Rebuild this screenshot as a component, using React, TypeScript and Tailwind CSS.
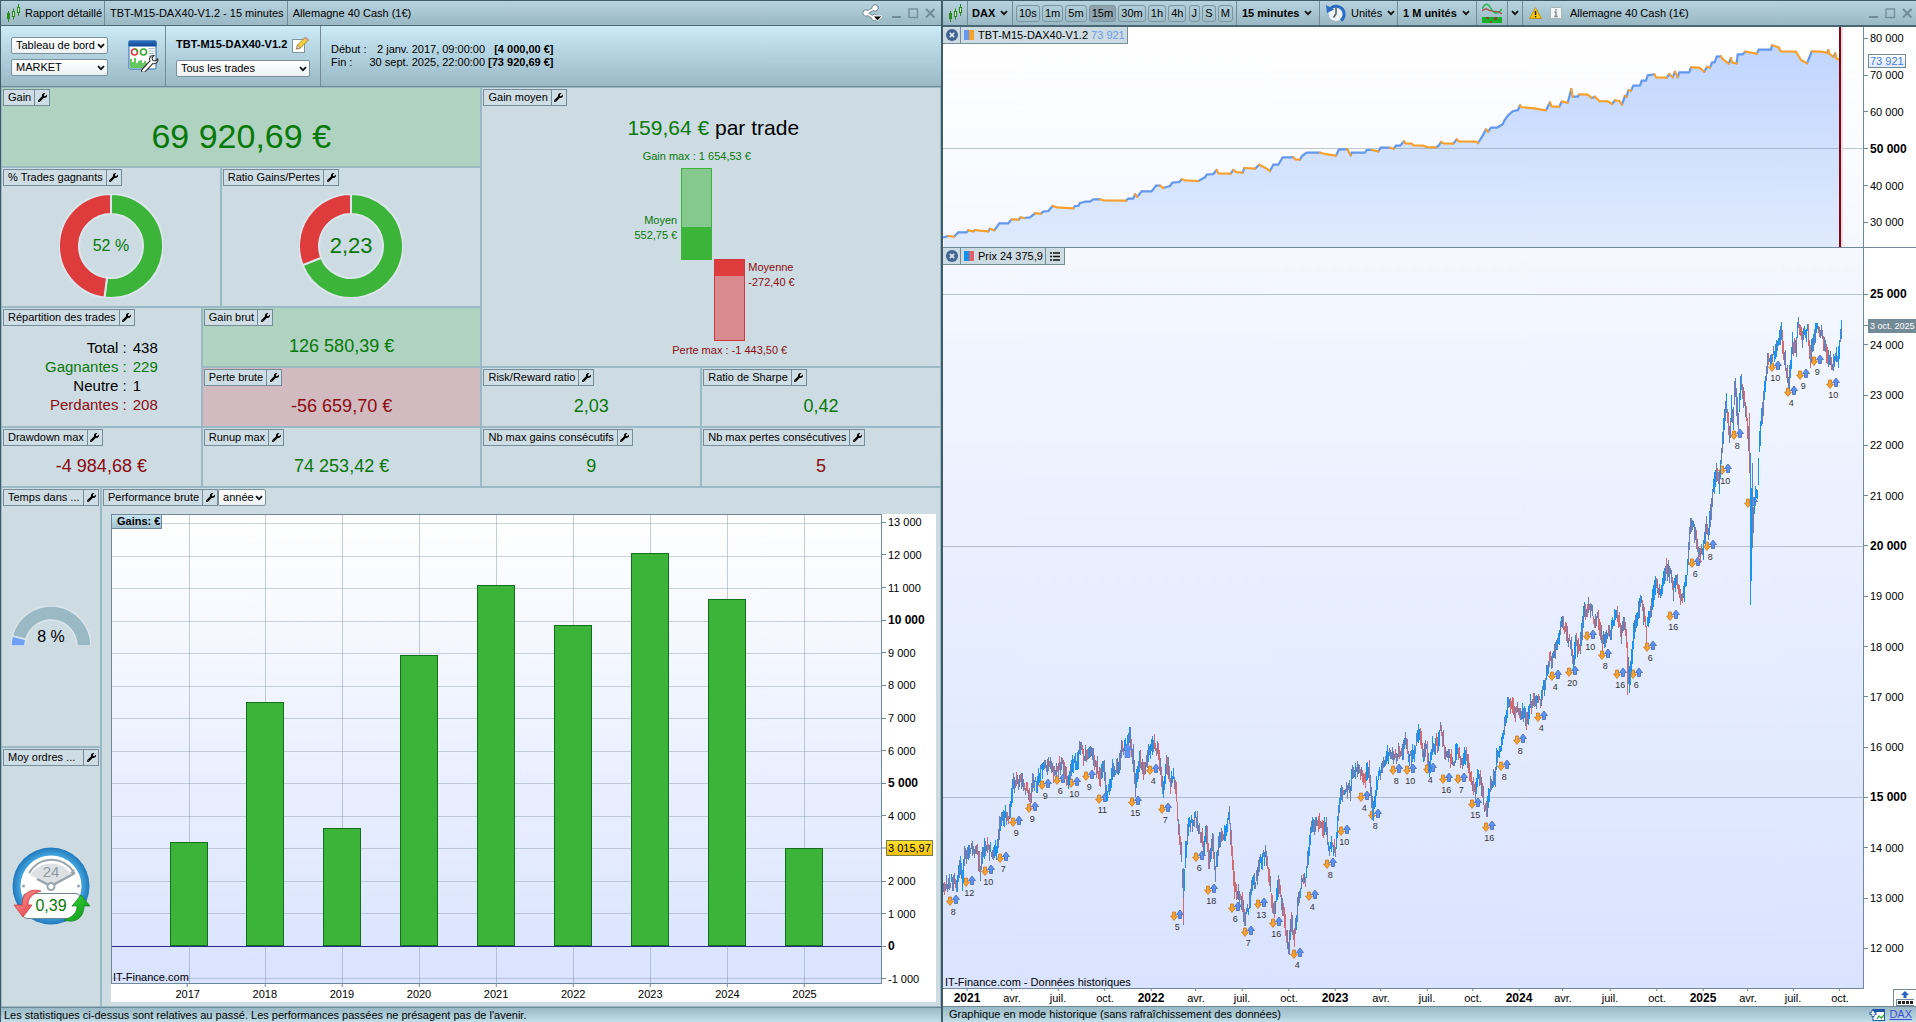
import React from "react";
import { FaWrench } from "react-icons/fa";

const FONT = "font-['Liberation_Sans',Arial,sans-serif]";

/* ---------- small icons ---------- */

function Candles() {
  return (
    <svg width="16" height="18" viewBox="0 0 16 18" className="shrink-0" aria-hidden="true">
      <path d="M2.500 7v11M7.500 4.500v11M12.500 0v12" stroke="#2c8a1c" fill="none" />
      <rect x="1" y="9" width="3" height="6" fill="#2c8a1c" />
      <rect x="6.500" y="7.500" width="2" height="5" fill="#dff2d8" stroke="#2c8a1c" />
      <rect x="11.500" y="3.500" width="2" height="5" fill="#dff2d8" stroke="#2c8a1c" />
    </svg>
  );
}

function Chevron({ className = "" }: { className?: string }) {
  return (
    <svg width="8" height="6" viewBox="0 0 8 6" className={`shrink-0 ${className}`} aria-hidden="true">
      <path d="M1 1.200l3 3 3-3" stroke="#111" strokeWidth="1.800" fill="none" />
    </svg>
  );
}

function WindowControls() {
  return (
    <div className="flex items-center gap-1.5">
      <button aria-label="Réduire" className="flex">
        <svg width="11" height="12"><path d="M1 10h9" stroke="#728b97" strokeWidth="2" /></svg>
      </button>
      <button aria-label="Agrandir" className="flex">
        <svg width="11" height="12"><rect x="1" y="2" width="8.500" height="8.500" stroke="#728b97" strokeWidth="1.300" fill="none" /></svg>
      </button>
      <button aria-label="Fermer" className="flex">
        <svg width="10" height="12"><path d="M1 2l8.500 8.500M9.500 2L1 10.500" stroke="#728b97" strokeWidth="2" /></svg>
      </button>
    </div>
  );
}

function ShareIcon() {
  return (
    <svg width="21" height="18" viewBox="0 0 21 18" aria-hidden="true">
      <g stroke="#6f8793" strokeWidth="3.600"><path d="M4 9l9-5M4 9l8 5" /></g>
      <g fill="#fff" stroke="#6f8793"><circle cx="4" cy="9" r="3.200" /><circle cx="13" cy="4" r="3.200" /><circle cx="12.500" cy="13.500" r="3.200" /></g>
      <g stroke="#fff" strokeWidth="2"><path d="M4 9l9-5M4 9l8 5" /></g>
      <path d="M11 12h9l-4.500 5z" fill="#000" stroke="#fff" />
    </svg>
  );
}

function ReportIcon() {
  return (
    <svg width="32" height="32" viewBox="0 0 32 32" aria-hidden="true">
      <defs>
        <linearGradient id="repBar" x1="0" y1="0" x2="0" y2="1">
          <stop offset="0" stopColor="#2f6fbd" /><stop offset="1" stopColor="#0d4795" />
        </linearGradient>
      </defs>
      <rect x="1" y="1" width="27" height="28" rx="1.500" fill="#fff" stroke="#2a66ae" />
      <rect x="0.500" y="0.500" width="28" height="6" rx="1" fill="url(#repBar)" />
      <circle cx="6.500" cy="12" r="3" fill="none" stroke="#d8383c" strokeWidth="1.600" />
      <path d="M6.500 9a3 3 0 0 1 3 3" fill="none" stroke="#35a834" strokeWidth="1.600" />
      <circle cx="15.500" cy="12" r="3" fill="none" stroke="#35a834" strokeWidth="1.600" />
      <path d="M20.500 8.500h6M20.500 11h6M20.500 13.500h6M20.500 16h6" stroke="#a9bcc6" />
      <path d="M3 28v-9M5 28v-6M7 28V18M9 28v-5M11 28v-7M13 28V20M15 28v-5M17 28v-7M19 28v-5" stroke="#35b52b" strokeWidth="1.500" />
      <path d="M14 29.500l8-8.500c-1.400-3 .8-6 4-5.500l-2 2.400 1 2.600 2.800.4 1.800-2c1 3-1.700 5.600-4.800 4.700l-7.600 8c-2 1.800-4.800-.3-3.200-2.100z" fill="#fff" stroke="#333" strokeWidth="1.100" />
    </svg>
  );
}

function PencilIcon() {
  return (
    <svg width="18" height="18" viewBox="0 0 18 18" aria-hidden="true">
      <rect x="0.500" y="3.500" width="12" height="13" fill="#fff" stroke="#7e949e" />
      <path d="M4.500 13l1-4 8-8 3 3-8 8z" fill="#f6cf3c" stroke="#8f7a31" strokeWidth=".8" />
      <path d="M4.500 13l1-4 3 3z" fill="#f3e3c0" stroke="#7a6a3a" strokeWidth=".6" />
      <path d="M12.200 2.300l1.300-1.300 3 3-1.300 1.300z" fill="#d89aa0" />
    </svg>
  );
}

function HistoryClock() {
  return (
    <svg width="20" height="20" viewBox="0 0 20 20" aria-hidden="true">
      <circle cx="10" cy="10.500" r="8" fill="#eef4fb" stroke="#9fb1bf" />
      <path d="M4 6a8 8 0 1 1 11 11.500" fill="none" stroke="#2c6cc4" strokeWidth="3" />
      <path d="M0 2l1 8 7-3.500z" fill="#2c6cc4" />
      <path d="M10 5v6l-2.500 3.500" stroke="#555" strokeWidth="1.500" fill="none" />
    </svg>
  );
}

function IndicatorIcon() {
  return (
    <svg width="20" height="20" viewBox="0 0 20 20" aria-hidden="true">
      <path d="M0 6C3 0 6 0 8 4s6 10 12 2" stroke="#27b54a" strokeWidth="1.500" fill="none" />
      <path d="M0 8c4-4 6-1 9 0s7-1 11 3" stroke="#a8554e" strokeWidth="1.300" fill="none" />
      <rect y="14" width="20" height="6" fill="#17b02b" />
      <path d="M4 14h3v2H4zM12 14h3v3h-3zM8 18h2v2H8z" fill="#8a4a28" />
    </svg>
  );
}

function WarningIcon() {
  return (
    <svg width="13" height="12" viewBox="0 0 13 12" aria-hidden="true">
      <path d="M6.500.7L12.500 11.500H.5z" fill="#fbc816" stroke="#b98f12" strokeWidth=".9" strokeLinejoin="round" />
      <path d="M6.500 4v4" stroke="#222" strokeWidth="1.500" /><path d="M6.500 9v1.400" stroke="#222" strokeWidth="1.500" />
    </svg>
  );
}

function InfoIcon() {
  return (
    <svg width="12" height="12" viewBox="0 0 12 12" aria-hidden="true">
      <rect x=".5" y=".5" width="11" height="11" rx="1" fill="#f4f6f7" stroke="#a3b3ba" />
      <path d="M6 2v1.600M4.500 5H6v4.500M4.300 9.500h3.500" stroke="#7d8a91" strokeWidth="1.400" fill="none" />
    </svg>
  );
}

function CloseBadge() {
  return (
    <svg width="12" height="12" viewBox="0 0 12 12" aria-hidden="true">
      <circle cx="6" cy="6" r="6" fill="#446391" />
      <path d="M3.800 3.800l4.400 4.400M8.200 3.800L3.800 8.200" stroke="#dce8f0" strokeWidth="1.700" />
    </svg>
  );
}

/* ---------- shared pieces ---------- */

function Choice({ label, options, className = "" }: { label: string; options: string[]; className?: string }) {
  return (
    <span className={`relative flex h-[17px] ${className}`}>
      <select aria-label={label} className="w-full appearance-none rounded-[2px] border border-[#7b929d] bg-linear-to-b from-white to-[#eef1f3] pl-1 pr-2.5 text-[11px] leading-[15px] text-black">
        {options.map((o) => (
          <option key={o}>{o}</option>
        ))}
      </select>
      <Chevron className="pointer-events-none absolute right-[3px] top-[6px]" />
    </span>
  );
}

function Chip({ title, wide = false }: { title: string; wide?: boolean }) {
  return (
    <div className={`flex h-[17px] border border-[#758d99] bg-[#cfdde4] text-[11px] leading-[15px] ${wide ? "w-full" : ""}`}>
      <h2 className={`whitespace-nowrap pl-1 pr-[3px] ${wide ? "flex-1" : ""}`}>{title}</h2>
      <button aria-label={`Réglages : ${title}`} className="flex w-[15px] items-center justify-center border-l border-[#758d99]">
        <FaWrench size={9} />
      </button>
    </div>
  );
}

function Card({ title, children, tone = "bg-[#cddce3]", className = "", wide = false }: { title: string; children?: React.ReactNode; tone?: string; className?: string; wide?: boolean }) {
  return (
    <section className={`flex min-w-0 flex-col items-start p-px ${tone} ${className}`}>
      <Chip title={title} wide={wide} />
      <div className="flex w-full flex-1 items-center justify-center">{children}</div>
    </section>
  );
}

const GREEN = "text-[#087808]";
const RED = "text-[#8c0b12]";

function Figure({ value, tone }: { value: string; tone: string }) {
  return <p className={`whitespace-nowrap text-[18px] leading-[22px] ${tone}`}>{value}</p>;
}

function polar(cx: number, cy: number, r: number, share: number) {
  const a = share * 2 * Math.PI - Math.PI / 2;
  return `${(cx + r * Math.cos(a)).toFixed(2)} ${(cy + r * Math.sin(a)).toFixed(2)}`;
}

function ring(cx: number, cy: number, R: number, r: number, from: number, to: number) {
  const big = to - from > 0.5 ? 1 : 0;
  return `M${polar(cx, cy, R, from)}A${R} ${R} 0 ${big} 1 ${polar(cx, cy, R, to)}L${polar(cx, cy, r, to)}A${r} ${r} 0 ${big} 0 ${polar(cx, cy, r, from)}Z`;
}

function Donut({ share, label, size }: { share: number; label: string; size: string }) {
  return (
    <div className="relative flex size-[104px] items-center justify-center">
      <svg viewBox="0 0 104 104" className="absolute inset-0" aria-hidden="true">
        <g stroke="#dbe6ec" strokeWidth="2">
          <path d={ring(52, 52, 52, 32, 0, share)} fill="#3cb43a" />
          <path d={ring(52, 52, 52, 32, share, 1)} fill="#dd3b3c" />
        </g>
      </svg>
      <span className={`relative ${GREEN} ${size}`}>{label}</span>
    </div>
  );
}

/* ---------- report window ---------- */

function AverageGain() {
  return (
    <Card title="Gain moyen">
      <div className="flex flex-col items-center self-start pl-1 pt-2 text-[11px] leading-[15px]">
        <p className="mb-[7px] text-[21px] leading-7">
          <span className={GREEN}>159,64 €</span> par trade
        </p>
        <div className="flex gap-[2px]">
          <div className="flex w-[31px] flex-col items-center">
            <p className={`whitespace-nowrap ${GREEN}`}>Gain max : 1 654,53 €</p>
            <div className="relative mt-1 flex h-[92px] w-full flex-col justify-end border border-[#3cb43a] bg-[#86c98e]">
              <div className="h-8 bg-[#3cb43a]" />
              <p className={`absolute right-full bottom-[46px] mr-[5px] translate-y-full whitespace-nowrap text-right ${GREEN}`}>
                Moyen<br />552,75 €
              </p>
            </div>
          </div>
          <div className="flex w-[31px] flex-col items-center pt-[110px]">
            <div className="relative h-[82px] w-full border border-[#cf3a40] bg-[#d88a8e]">
              <div className="h-4 bg-[#dd3b3c]" />
              <p className={`absolute left-full top-0 ml-[4px] whitespace-nowrap ${RED}`}>
                Moyenne<br />-272,40 €
              </p>
            </div>
            <p className={`mt-0.5 whitespace-nowrap ${RED}`}>Perte max : -1 443,50 €</p>
          </div>
        </div>
      </div>
    </Card>
  );
}

const BREAKDOWN = [
  { name: "Total", value: "438", tone: "text-black" },
  { name: "Gagnantes", value: "229", tone: GREEN },
  { name: "Neutre", value: "1", tone: "text-black" },
  { name: "Perdantes", value: "208", tone: RED },
];

function Breakdown() {
  return (
    <table className="text-[15px] leading-[19px]">
      <tbody>
        {BREAKDOWN.map((r) => (
          <tr key={r.name} className={r.tone}>
            <th scope="row" className="p-0 text-right font-normal">{r.name}&nbsp;:</th>
            <td className="pl-1.5">{r.value}</td>
          </tr>
        ))}
      </tbody>
    </table>
  );
}

function Gauge() {
  return (
    <div className="relative flex h-10 w-20 items-end justify-center">
      <svg viewBox="0 0 80 40" className="absolute inset-0" aria-hidden="true">
        <g stroke="#dbe6ec" strokeWidth="1.500">
          <path d={ring(40, 40, 40, 26, 0.79, 1.25)} fill="#9bb9c5" />
          <path d={ring(40, 40, 40, 26, 0.75, 0.79)} fill="#6f9ff8" />
        </g>
      </svg>
      <span className="relative text-[16px] leading-[18px]">8 %</span>
    </div>
  );
}

function OrdersClock() {
  return (
    <div className="relative h-20 w-20">
      <svg viewBox="0 0 80 80" className="absolute inset-0" aria-hidden="true">
        <defs>
          <radialGradient id="rim"><stop offset=".8" stopColor="#43a5dd" /><stop offset="1" stopColor="#2178bd" /></radialGradient>
          <linearGradient id="dn" x1="0" y1="0" x2="1" y2="1"><stop offset="0" stopColor="#ff9a9a" /><stop offset="1" stopColor="#e0353a" /></linearGradient>
          <linearGradient id="up" x1="0" y1="0" x2="1" y2="1"><stop offset="0" stopColor="#3fdc3a" /><stop offset="1" stopColor="#0a8f17" /></linearGradient>
        </defs>
        <circle cx="40" cy="40" r="38.500" fill="url(#rim)" />
        <circle cx="40" cy="40" r="30.500" fill="#fff" />
        <path d="M19 29A25 25 0 0 1 61 29L40 40z" fill="#dde1e4" />
        <path d="M18 27A26 26 0 0 1 62 25" fill="none" stroke="#9aa5ac" strokeWidth="2" />
        <path d="M64 28l-5-1 4-4z" fill="#9aa5ac" />
        <path d="M26 33l14 7 24-13" fill="none" stroke="#9aa5ac" strokeWidth="2.500" />
        <circle cx="40" cy="40.500" r="3.500" fill="#fff" stroke="#9aa5ac" strokeWidth="2" />
        <circle cx="12.500" cy="40" r="1.500" fill="#9aa5ac" /><circle cx="67.500" cy="40" r="1.500" fill="#9aa5ac" />
        <rect x="12" y="47.500" width="57" height="25" rx="4" fill="#fff" stroke="#6d8593" />
        <path d="M30 45c-11-3-19 2-19 14H3l9 12 9-12h-4c0-6 3-11 13-14z" fill="url(#dn)" stroke="#c32f35" strokeWidth=".7" />
        <path d="M53 74c12 4 20-3 20-14h6l-9-11-9 11h5c0 7-4 11-13 14z" fill="url(#up)" stroke="#08801a" strokeWidth=".7" />
      </svg>
      <span className="absolute inset-x-0 top-[17px] text-center text-[15px] leading-[18px] text-[#8f999f]">24</span>
      <span className={`absolute inset-x-0 top-[51px] text-center text-[16px] leading-[18px] ${GREEN}`}>0,39</span>
    </div>
  );
}

const YEARLY = [
  { year: 2017, gain: 3174 },
  { year: 2018, gain: 7487 },
  { year: 2019, gain: 3631 },
  { year: 2020, gain: 8934 },
  { year: 2021, gain: 11115 },
  { year: 2022, gain: 9858 },
  { year: 2023, gain: 12073 },
  { year: 2024, gain: 10656 },
  { year: 2025, gain: 3015.97 },
];
const GAIN_TICKS = [13000, 12000, 11000, 10000, 9000, 8000, 7000, 6000, 5000, 4000, 3000, 2000, 1000, 0, -1000];
const gainTop = (v: number) => 1.77 + ((13000 - v) / 1000) * 6.94;
const yearLeft = (i: number) => 9.95 + i * 10;
const spaced = (v: number) => String(v).replace(/(\d)(\d{3})$/, "$1 $2");

function PerformanceChart() {
  return (
    <div className="mb-[3px] ml-2 mr-[3px] mt-2 flex flex-1 flex-col self-stretch bg-white">
      <div className="flex flex-1">
        <div className="relative flex-1 overflow-hidden border border-[#71889a] bg-linear-to-b from-white to-[#d9e3ff]">
          {GAIN_TICKS.map((v) => (
            <div key={v} className={`absolute inset-x-0 h-px ${v === 0 ? "bg-[#2a2a8c]" : "bg-[#71889a]/35"}`} style={{ top: `${gainTop(v)}%` }} />
          ))}
          {YEARLY.map((y, i) => (
            <div key={y.year} className="absolute inset-y-0 w-px bg-[#71889a]/40" style={{ left: `${yearLeft(i)}%` }} />
          ))}
          {YEARLY.map((y, i) => (
            <div
              key={y.year}
              className="absolute w-[38px] -translate-x-1/2 border border-[#12701c] bg-[#3cb43a]"
              style={{ left: `${yearLeft(i)}%`, top: `${gainTop(y.gain)}%`, bottom: `${99.8 - gainTop(0)}%` }}
            />
          ))}
          <div className="absolute left-0 top-0 border-b border-r border-[#71889a] bg-linear-to-b from-[#c6e6f3] to-[#a3c0cc] pl-[5px] pr-px text-[11px] font-bold leading-[13px]">Gains: €</div>
          <div className="absolute bottom-0 left-px text-[11px] leading-[12px]">IT-Finance.com</div>
        </div>
        <div className="relative w-[54px] text-[11px] leading-[14px]">
          {GAIN_TICKS.map((v) => (
            <div key={v} className="absolute left-0 flex -translate-y-1/2 items-center gap-0.5 whitespace-nowrap" style={{ top: `${gainTop(v)}%` }}>
              <span className="h-px w-1 bg-[#71889a]" />
              {v !== 3000 && <span className={v % 5000 === 0 ? "text-[12px] font-bold" : ""}>{spaced(v)}</span>}
            </div>
          ))}
          <div className="absolute left-1 -translate-y-1/2 whitespace-nowrap border border-[#7d7c46] bg-linear-to-b from-[#fde12c] to-[#f0c010] px-px" style={{ top: `${gainTop(3016)}%` }}>
            3 015,97
          </div>
        </div>
      </div>
      <div className="flex h-[18px]">
        <div className="relative flex-1 text-[11px] leading-[14px]">
          {YEARLY.map((y, i) => (
            <div key={y.year} className="absolute flex -translate-x-1/2 flex-col items-center" style={{ left: `${yearLeft(i)}%` }}>
              <span className="h-[3px] w-px bg-[#71889a]" />
              <span>{y.year}</span>
            </div>
          ))}
        </div>
        <div className="w-[54px]" />
      </div>
    </div>
  );
}

function ReportWindow() {
  return (
    <section className="flex min-w-0 flex-col border-l border-r-2 border-t border-[#3f5b68] bg-[#9bb9c5]">
      <header className="flex h-[25px] items-stretch border-b border-[#4a6775] bg-linear-to-b from-[#b6d3df] to-[#9ab7c4] text-[11px]">
        <div className="flex items-center gap-[3px] px-[5px]">
          <Candles />
          <span className="w-[74px] whitespace-nowrap">Rapport détaillé</span>
        </div>
        <span className="flex items-center whitespace-nowrap border-l border-[#728b97] pl-[5px] pr-[3px]">TBT-M15-DAX40-V1.2 - 15 minutes</span>
        <span className="flex items-center whitespace-nowrap border-l border-[#728b97] px-[5px]">Allemagne 40 Cash (1€)</span>
        <div className="ml-auto flex items-center gap-2 pr-1.5">
          <button aria-label="Partager"><ShareIcon /></button>
          <WindowControls />
        </div>
      </header>

      <div className="flex h-[61px] items-stretch border-b border-[#6c8895] bg-linear-to-b from-[#cbebf9] to-[#9ab8c5] text-[11px]">
        <div className="flex items-center gap-5 pl-2.5 pr-[5px]">
          <div className="flex flex-col gap-[5px]">
            <Choice label="Vue" options={["Tableau de bord"]} className="w-[97px]" />
            <Choice label="Type d'ordre" options={["MARKET"]} className="w-[97px]" />
          </div>
          <button aria-label="Configurer le rapport"><ReportIcon /></button>
        </div>
        <div className="flex flex-col justify-center gap-1.5 border-l border-[#728b97] px-2.5">
          <div className="flex items-center justify-between">
            <h1 className="whitespace-nowrap font-bold">TBT-M15-DAX40-V1.2</h1>
            <button aria-label="Modifier"><PencilIcon /></button>
          </div>
          <Choice label="Trades" options={["Tous les trades"]} className="w-[134px]" />
        </div>
        <div className="flex items-center border-l border-[#728b97] px-2.5">
          <dl className="grid grid-cols-[auto_auto_auto] gap-x-[3px] leading-[13px]">
            <dt>Début :</dt>
            <dd className="text-right">2 janv. 2017, 09:00:00</dd>
            <dd className="text-right font-bold">[4 000,00 €]</dd>
            <dt>Fin :</dt>
            <dd className="text-right">30 sept. 2025, 22:00:00</dd>
            <dd className="text-right font-bold">[73 920,69 €]</dd>
          </dl>
        </div>
      </div>

      <main className="flex flex-1 flex-col gap-[2px] p-px">
        <div className="grid grid-cols-[479fr_458fr] gap-[2px]">
          <div className="grid grid-rows-[78px_138px_118px_58px] gap-[2px]">
            <Card title="Gain" tone="bg-[#afd3c0]">
              <p className={`text-[34px] leading-10 ${GREEN}`}>69 920,69 €</p>
            </Card>
            <div className="grid grid-cols-[218fr_259fr] gap-[2px]">
              <Card title="% Trades gagnants"><Donut share={0.52} label="52 %" size="text-[16px]" /></Card>
              <Card title="Ratio Gains/Pertes"><Donut share={0.69} label="2,23" size="text-[22px]" /></Card>
            </div>
            <div className="grid grid-cols-[199fr_278fr] gap-[2px]">
              <Card title="Répartition des trades"><Breakdown /></Card>
              <div className="grid grid-rows-2 gap-[2px]">
                <Card title="Gain brut" tone="bg-[#afd3c0]"><Figure value="126 580,39 €" tone={GREEN} /></Card>
                <Card title="Perte brute" tone="bg-[#d1bac0]"><Figure value="-56 659,70 €" tone={RED} /></Card>
              </div>
            </div>
            <div className="grid grid-cols-[199fr_278fr] gap-[2px]">
              <Card title="Drawdown max"><Figure value="-4 984,68 €" tone={RED} /></Card>
              <Card title="Runup max"><Figure value="74 253,42 €" tone={GREEN} /></Card>
            </div>
          </div>
          <div className="grid grid-rows-[278px_58px_58px] gap-[2px]">
            <div className="grid"><AverageGain /></div>
            <div className="grid grid-cols-[218fr_238fr] gap-[2px]">
              <Card title="Risk/Reward ratio"><Figure value="2,03" tone={GREEN} /></Card>
              <Card title="Ratio de Sharpe"><Figure value="0,42" tone={GREEN} /></Card>
            </div>
            <div className="grid grid-cols-[218fr_238fr] gap-[2px]">
              <Card title="Nb max gains consécutifs"><Figure value="9" tone={GREEN} /></Card>
              <Card title="Nb max pertes consécutives"><Figure value="5" tone={RED} /></Card>
            </div>
          </div>
        </div>

        <div className="flex min-h-[400px] flex-1 gap-[2px]">
          <div className="flex w-[98px] shrink-0 flex-col gap-[2px]">
            <Card title="Temps dans ..." className="flex-1" wide><Gauge /></Card>
            <Card title="Moy ordres ..." className="flex-1" wide><OrdersClock /></Card>
          </div>
          <section className="flex min-w-0 flex-1 flex-col bg-[#cddce3] p-px">
            <div className="flex">
              <Chip title="Performance brute" />
              <Choice label="Période" options={["année"]} className="w-12" />
            </div>
            <PerformanceChart />
          </section>
        </div>
      </main>

      <footer className="h-[15px] shrink-0 whitespace-nowrap border-t border-[#6c8895] bg-linear-to-b from-[#9ab8c5] to-[#c0dfea] pl-[3px] text-[11px] leading-[15px]">
        Les statistiques ci-dessus sont relatives au passé. Les performances passées ne présagent pas de l'avenir.
      </footer>
    </section>
  );
}

/* ---------- chart window ---------- */

type Pt = [number, number];
const place = (ox: number, oy: number, pts: Pt[]): Pt[] => pts.map(([x, y]) => [ox + x / 3, oy + y / 3]);

const EQUITY: Pt[] = [
  ...place(-3, -27, [
    [12, 712], [25, 708], [42, 710], [55, 697], [80, 697], [85, 691], [100, 694], [105, 690], [120, 692], [145, 694], [150, 686], [163, 691], [178, 670], [205, 670], [215, 658], [236, 659], [242, 652], [252, 654], [270, 652], [285, 640], [302, 641],
    [310, 635], [325, 633], [338, 618], [350, 622], [400, 625], [405, 618], [415, 618], [420, 609], [435, 605], [450, 605], [460, 598], [480, 598], [490, 601], [558, 602], [565, 596], [580, 596], [585, 583], [592, 590], [605, 574], [635, 574], [648, 557], [660, 557], [670, 564],
    [690, 558], [697, 548], [718, 546], [725, 538], [735, 541], [775, 543], [795, 532], [800, 524], [820, 522], [830, 510], [835, 520], [872, 521], [880, 510], [888, 516], [908, 518], [913, 504], [945, 506], [958, 494], [975, 503], [990, 513],
    [1000, 494], [1015, 494], [1028, 472], [1060, 472], [1066, 478], [1080, 479], [1086, 468], [1100, 458], [1140, 458], [1160, 463], [1188, 467], [1197, 448], [1222, 448], [1232, 466], [1235, 458], [1275, 458], [1280, 450], [1295, 450], [1315, 454], [1322, 443], [1350, 443], [1362, 446],
    [1368, 437], [1380, 437], [1392, 424], [1396, 430], [1415, 431], [1420, 436], [1450, 437], [1462, 441],
  ]),
  ...place(483, -27, [
    [0, 441], [30, 442], [38, 437], [45, 426], [52, 430], [82, 431], [92, 418], [98, 424], [150, 425], [156, 429], [170, 407], [180, 388], [186, 395], [195, 383], [213, 383], [230, 373], [235, 362], [247, 345], [260, 334], [276, 330], [282, 316], [285, 321], [325, 325], [360, 331],
    [372, 307], [376, 319], [400, 320], [407, 305], [425, 308], [436, 267], [440, 290], [455, 290], [460, 283], [485, 284], [497, 294], [507, 290], [520, 303], [545, 304], [558, 312], [567, 301], [580, 303], [588, 314], [597, 287], [602, 290], [607, 271],
    [615, 272], [622, 257], [642, 257], [647, 242], [660, 242], [665, 226], [685, 223], [690, 232], [722, 233], [730, 222], [740, 232], [747, 215], [755, 232], [760, 217], [790, 217], [795, 202], [820, 203], [835, 215], [843, 200], [852, 203],
    [858, 187], [866, 187], [872, 170], [885, 169], [890, 177], [908, 191], [915, 174], [918, 187], [932, 190], [935, 163], [950, 163], [958, 155], [992, 161], [998, 149], [1035, 149], [1038, 136], [1058, 142], [1064, 154], [1110, 155], [1125, 180], [1143, 190], [1157, 154],
    [1185, 155], [1203, 158], [1207, 150], [1210, 162], [1222, 170], [1228, 160], [1231, 175], [1245, 182],
  ]),
];

const PRICE: Pt[] = [
  ...place(-3, 432, [
    [8, 630], [30, 605], [50, 610], [60, 560], [65, 600], [72, 530], [90, 510], [110, 510], [120, 570], [133, 490], [150, 510], [165, 515], [173, 500], [178, 440], [195, 400], [205, 420], [218, 310], [240, 305], [262, 330], [270, 360], [278, 300], [290, 310], [300, 275],
    [325, 245], [340, 275], [370, 250], [380, 310], [390, 270], [410, 240], [420, 205], [430, 225], [455, 220], [465, 245], [480, 290], [490, 260], [497, 340], [505, 330], [518, 265], [530, 270], [545, 205], [555, 195], [568, 165], [578, 230], [585, 320], [597, 240],
    [613, 280], [625, 220], [637, 180], [655, 220], [668, 330], [680, 250], [690, 310], [700, 285], [708, 330], [712, 430], [718, 470], [724, 540], [729, 680], [735, 530], [745, 440], [765, 410], [775, 450], [790, 500], [797, 440], [806, 540], [817, 480], [825, 570], [838, 480], [850, 470],
    [866, 405], [875, 520], [882, 620], [895, 640], [905, 660], [912, 710], [925, 690], [935, 600], [945, 610], [957, 550], [975, 520], [985, 580], [995, 670], [1003, 690], [1015, 610], [1025, 670], [1035, 740], [1045, 800], [1052, 720], [1062, 770], [1072, 680], [1085, 600],
    [1095, 600], [1105, 520], [1112, 440], [1130, 425], [1150, 450], [1157, 420], [1163, 510], [1175, 500], [1185, 510], [1190, 450], [1200, 340], [1210, 330], [1230, 330], [1235, 285], [1255, 275], [1275, 300], [1285, 265], [1297, 400], [1307, 330], [1325, 250],
    [1345, 220], [1365, 225], [1385, 215], [1395, 170], [1405, 230], [1412, 230], [1425, 200], [1437, 155], [1448, 220], [1456, 190],
  ]),
  ...place(483, 432, [
    [0, 190], [8, 260], [18, 200], [35, 180], [44, 140], [55, 210], [75, 240], [85, 240], [93, 205], [105, 245], [118, 220], [130, 280], [145, 335], [157, 280], [165, 310], [173, 370], [182, 385], [192, 320], [205, 300], [212, 220], [222, 205], [235, 140],
    [245, 80], [255, 70], [262, 95], [278, 90], [285, 110], [295, 95], [302, 120], [312, 75], [325, 60], [342, 60], [350, 30], [357, 0],
  ]),
  ...place(483, 22, [
    [360, 1210], [368, 1170], [380, 1160], [395, 1110], [410, 1050], [420, 1090], [432, 1120], [440, 1180], [448, 1110], [460, 1140], [475, 1020], [490, 1015], [505, 1050], [515, 1040], [528, 1110], [540, 1090], [550, 1090], [560, 1050], [570, 1030], [585, 1080], [598, 1070],
    [603, 1160], [608, 1230], [613, 1190], [625, 1060], [645, 995], [660, 1080], [675, 1010], [688, 930], [700, 970], [718, 895], [735, 910], [742, 960], [750, 930], [760, 970], [768, 980], [780, 930], [790, 780], [803, 770], [815, 850], [830, 840], [840, 770], [846, 800],
    [855, 710], [865, 620], [872, 600], [878, 640], [885, 560], [895, 450], [900, 400], [910, 490], [915, 420], [920, 460], [925, 330], [935, 460], [943, 335], [955, 400], [965, 480], [970, 600], [974, 800], [980, 760], [985, 690], [993, 660], [1000, 500], [1010, 400], [1018, 320], [1025, 260],
    [1035, 260], [1045, 250], [1055, 220], [1065, 175], [1075, 270], [1088, 340], [1098, 230], [1108, 240], [1115, 165], [1130, 200], [1145, 180], [1152, 270], [1160, 220], [1170, 170], [1183, 180], [1195, 230], [1205, 265], [1220, 280], [1235, 260], [1247, 160],
  ]),
];

type Mark = [number, number, string];
const placeMarks = (ox: number, oy: number, marks: Mark[]): Mark[] => marks.map(([x, y, n]) => [ox + x / 3, oy + y / 3, n]);
const MARKS: Mark[] = [
  ...placeMarks(-3, 432, [
    [31, 664, "8"], [79, 605, "12"], [136, 574, "10"], [181, 535, "7"], [220, 427, "9"], [268, 385, "9"], [307, 316, "9"], [352, 300, "6"], [394, 308, "10"], [439, 287, "9"], [478, 356, "11"], [577, 366, "15"], [631, 271, "4"], [667, 388, "7"], [703, 709, "5"],
    [769, 530, "6"], [805, 631, "18"], [877, 684, "6"], [916, 757, "7"], [955, 673, "13"], [1000, 730, "16"], [1063, 823, "4"], [1108, 649, "4"], [1162, 553, "8"], [1204, 452, "10"], [1264, 351, "4"], [1297, 406, "8"], [1360, 271, "8"], [1402, 271, "10"], [1462, 266, "4"],
  ]),
  ...placeMarks(483, 432, [[52, 296, "16"], [97, 296, "7"], [139, 373, "15"], [181, 442, "16"], [226, 257, "8"], [274, 180, "8"], [337, 112, "4"]]),
  ...placeMarks(483, 22, [
    [379, 1218, "4"], [430, 1207, "20"], [484, 1099, "10"], [529, 1156, "8"], [574, 1213, "16"], [622, 1213, "6"], [664, 1130, "6"], [733, 1039, "16"], [799, 880, "6"], [844, 828, "8"], [889, 601, "10"], [925, 496, "8"], [967, 698, ""], [1039, 292, "10"], [1087, 367, "4"],
    [1123, 316, "9"], [1165, 274, "9"], [1213, 341, "10"],
  ]),
];

const PLOT_W = 920;
const EQ_H = 220;
const PRICE_H = 740;

function randomizer(seed: number) {
  let s = seed;
  return () => {
    s = (s * 1664525 + 1013904223) % 4294967296;
    return s / 4294967296;
  };
}

function buildBars() {
  const rnd = randomizer(77);
  const up: string[] = [];
  const down: string[] = [];
  const mixed: string[] = [];
  let k = 0;
  for (let x = 0; x <= 898; x++) {
    while (k < PRICE.length - 2 && PRICE[k + 1][0] < x) k++;
    const [x0, y0] = PRICE[k];
    const [x1, y1] = PRICE[k + 1];
    const slope = (y1 - y0) / Math.max(1, x1 - x0);
    const mid = y0 + slope * Math.min(Math.max(x - x0, 0), x1 - x0) + (rnd() - 0.5) * 9;
    const half = 2 + rnd() * 6 + Math.min(Math.abs(slope) * 0.5, 6);
    const bar = `M${x + 0.5} ${(mid - half).toFixed(1)}V${(mid + half).toFixed(1)}`;
    const roll = rnd();
    if (slope < -1.2) (roll < 0.65 ? up : mixed).push(bar);
    else if (slope > 1.2) (roll < 0.6 ? down : mixed).push(bar);
    else (roll < 0.15 ? up : roll < 0.4 ? down : mixed).push(bar);
  }
  // Long wicks of the sharpest sell-offs.
  up.push("M807.5 205V357", "M808.5 240V333", "M686.5 420V445");
  down.push("M684.5 395V447", "M806.5 165V225");
  mixed.push("M809.500 215V300", "M240.5 620V677");
  return { up: up.join(""), down: down.join(""), mixed: mixed.join("") };
}
const BARS = buildBars();

function Tick({ top, label, strong = false }: { top: string; label: string; strong?: boolean }) {
  return (
    <div className="absolute left-0 flex -translate-y-1/2 items-center gap-0.5 whitespace-nowrap text-[11px] leading-[14px]" style={{ top }}>
      <span className="h-px w-1 bg-[#71889a]" />
      <span className={strong ? "text-[12px] font-bold" : ""}>{label}</span>
    </div>
  );
}

function PanelTag({ children, colors }: { children: React.ReactNode; colors: [string, string] }) {
  return (
    <div className="absolute left-0 top-0 flex h-[17px] items-stretch border-b border-r border-[#758d99] bg-[#cddce2] text-[11px] leading-4">
      <button aria-label="Fermer le panneau" className="flex w-[18px] items-center justify-center border-r border-[#758d99]"><CloseBadge /></button>
      <span className="flex items-center pl-[3px]">
        <svg width="10" height="10" aria-hidden="true"><rect width="5" height="10" fill={colors[0]} /><rect x="5" width="5" height="10" fill={colors[1]} /></svg>
      </span>
      {children}
    </div>
  );
}

function EquityPanel() {
  const top = (v: number) => `${(((80000 - v) / 10000) * 36.8 + 11.3) / 2.2}%`;
  const line = EQUITY.map(([x, y]) => `${x.toFixed(1)} ${y.toFixed(1)}`).join("L");
  let rise = "";
  let fall = "";
  EQUITY.slice(1).forEach(([x, y], i) => {
    const [px, py] = EQUITY[i];
    const seg = `M${px.toFixed(1)} ${py.toFixed(1)}L${x.toFixed(1)} ${y.toFixed(1)}`;
    if (y <= py) rise += seg;
    else fall += seg;
  });
  return (
    <div className="flex h-[221px] shrink-0 border-b border-[#71889a]">
      <div className="relative min-w-0 flex-1 bg-linear-to-b from-white to-[#f6f8ff]">
        <svg viewBox={`0 0 ${PLOT_W} ${EQ_H}`} preserveAspectRatio="none" className="absolute inset-0 h-full w-full" aria-label="Courbe de capital">
          <defs>
            <linearGradient id="eq" x1="0" y1="0" x2="0" y2="1"><stop offset="0" stopColor="#c1d6fe" /><stop offset="1" stopColor="#dfeafd" /></linearGradient>
          </defs>
          <path d={`M${line}V${EQ_H}H1Z`} fill="url(#eq)" />
          <path d="M0 121.500H920" stroke="#71889a" strokeOpacity=".45" />
          <path d={rise} stroke="#6497ee" strokeWidth="2.200" strokeLinecap="round" fill="none" />
          <path d={fall} stroke="#f7a12d" strokeWidth="2.200" strokeLinecap="round" fill="none" />
          <rect x="898" width="2" height={EQ_H} fill="#f5dbe3" />
          <rect x="896" width="2" height={EQ_H} fill="#7d0712" />
        </svg>
        <PanelTag colors={["#6497ee", "#f7a12d"]}>
          <span className="whitespace-nowrap pl-1 pr-0.5">TBT-M15-DAX40-V1.2 <span className="text-[#6f9ae8]">73 921</span></span>
        </PanelTag>
      </div>
      <div className="relative w-[53px] shrink-0 border-l border-[#71889a] bg-white">
        {[80000, 70000, 60000, 50000, 40000, 30000].map((v) => (
          <Tick key={v} top={top(v)} label={spaced(v)} strong={v === 50000} />
        ))}
        <div className="absolute left-1 -translate-y-1/2 whitespace-nowrap border border-[#71889a] bg-linear-to-b from-white to-[#dbe8fd] px-px text-[11px] leading-[12px] text-[#4a7bd8]" style={{ top: top(73921) }}>73 921</div>
      </div>
    </div>
  );
}

function Marker({ x, y, label }: { x: number; y: number; label: string }) {
  return (
    <div className="absolute -ml-1 -mt-[7px] w-[14px]" style={{ left: `${(x / PLOT_W) * 100}%`, top: `${(y / PRICE_H) * 100}%` }}>
      <svg width="14" height="13" viewBox="0 0 14 13" aria-hidden="true">
        <path d="M2.500 3h3v4h2L4 11.500.5 7h2z" fill="#f8a331" stroke="#c9781a" strokeWidth=".8" />
        <path d="M8.500 9.500h3v-4h2L10 1 6.500 5.500h2z" fill="#5a92f5" stroke="#4468ae" strokeWidth=".8" />
      </svg>
      <div className="text-center text-[9px] leading-[10px] text-[#333]">{label}</div>
    </div>
  );
}

const DATES: [number, string][] = [
  [24, "2021"], [69, "avr."], [115, "juil."], [162, "oct."], [208, "2022"], [253, "avr."], [299, "juil."], [346, "oct."], [392, "2023"], [438, "avr."],
  [484, "juil."], [530, "oct."], [576, "2024"], [620, "avr."], [667, "juil."], [714, "oct."], [760, "2025"], [805, "avr."], [850, "juil."], [897, "oct."],
];

function PricePanel() {
  const top = (v: number) => `${(((25000 - v) / 1000) * 50.23 + 46.4) / 7.4}%`;
  const ticks = [25, 24, 23, 22, 21, 20, 19, 18, 17, 16, 15, 14, 13, 12].map((n) => n * 1000);
  return (
    <div className="flex min-h-[400px] flex-1">
      <div className="relative min-w-0 flex-1 overflow-hidden border-b border-[#71889a] bg-linear-to-b from-[#f5f8ff] to-[#d9e3ff]">
        {[25000, 20000, 15000].map((v) => (
          <div key={v} className="absolute inset-x-0 h-px bg-[#71889a]/45" style={{ top: top(v) }} />
        ))}
        {MARKS.map(([x, y, n]) => (
          <Marker key={`${x}-${y}`} x={x} y={y} label={n} />
        ))}
        <svg viewBox={`0 0 ${PLOT_W} ${PRICE_H}`} preserveAspectRatio="none" className="absolute inset-0 h-full w-full" aria-label="Cours du DAX">
          <g fill="none" shapeRendering="crispEdges">
            <path d={BARS.mixed} stroke="#6a7fb8" />
            <path d={BARS.down} stroke="#d06c70" />
            <path d={BARS.up} stroke="#1a93ee" />
          </g>
          <path d="M182 509.500v-8h-2.500l5-5.500 5 5.500H187v8z" fill="#5a92f5" stroke="#4b78c9" strokeWidth=".7" />
        </svg>
        <PanelTag colors={["#1193f5", "#dd6468"]}>
          <span className="whitespace-nowrap pl-1 pr-[2px]">Prix 24 375,9</span>
          <button aria-label="Options du prix" className="flex w-[19px] items-center justify-center border-l border-[#758d99]">
            <svg width="10" height="9" aria-hidden="true"><path d="M0 1h2M3 1h7M0 4.500h2M3 4.500h7M0 8h2M3 8h7" stroke="#111" strokeWidth="1.400" /></svg>
          </button>
        </PanelTag>
        <div className="absolute bottom-0 left-0.5 text-[11px] leading-[11px]">IT-Finance.com - Données historiques</div>
      </div>
      <div className="relative w-[53px] shrink-0 border-l border-[#71889a] bg-white">
        {ticks.map((v) => (
          <Tick key={v} top={top(v)} label={spaced(v)} strong={v % 5000 === 0} />
        ))}
        <div className="absolute left-0 flex w-full -translate-y-1/2 items-center whitespace-nowrap" style={{ top: top(24378) }}>
          <span className="h-px w-1 shrink-0 bg-[#71889a]" />
          <span className="flex-1 bg-[#728b97] pl-0.5 text-[9px] leading-[14px] text-white">3 oct. 2025</span>
        </div>
      </div>
    </div>
  );
}

function TimeAxis() {
  return (
    <div className="flex h-[17px] shrink-0 bg-white">
      <div className="relative flex-1 text-[11px] leading-[14px]">
        {DATES.map(([x, d]) => (
          <div key={x} className="absolute flex -translate-x-1/2 flex-col items-center" style={{ left: `${(x / PLOT_W) * 100}%` }}>
            <span className="h-0.5 w-px bg-[#71889a]" />
            <span className={d.startsWith("20") ? "text-[12px] font-bold" : ""}>{d}</span>
          </div>
        ))}
      </div>
      <div className="flex w-[53px] justify-end">
        <button aria-label="Afficher le panneau" className="flex w-[23px] items-center justify-center border-l border-t border-[#71889a]">
          <svg width="18" height="15" viewBox="0 0 18 15" aria-hidden="true">
            <path d="M9 0l4 4h-2.500v3h-3V4H5z" fill="#2160c4" />
            <rect x=".5" y="8.500" width="18" height="6" fill="#fff" stroke="#71889a" />
            <path d="M2 11.500h15" stroke="#222" strokeWidth="3" strokeDasharray="3 1" />
          </svg>
        </button>
      </div>
    </div>
  );
}

const FRAMES = ["10s", "1m", "5m", "15m", "30m", "1h", "4h", "J", "S", "M"];

function ChartWindow() {
  const cell = "flex items-center border-l border-[#728b97]";
  return (
    <section className="flex min-w-0 flex-col">
      <header className="flex h-[27px] shrink-0 items-stretch overflow-hidden border-b-2 border-t border-b-[#4a6775] border-t-[#3f5b68] bg-linear-to-b from-[#b6d3df] to-[#9ab7c4] text-[11px]">
        <div className="flex w-6 items-center pl-[5px]"><Candles /></div>
        <button className={`${cell} w-[45px] gap-[5px] pl-1 font-bold`}>DAX <Chevron /></button>
        <div className={`${cell} w-56 justify-between px-[3px]`}>
          {FRAMES.map((f) => (
            <button key={f} className={`h-[17px] rounded-[3px] border border-[#7b95a1] px-[2px] leading-[14px] ${f === "15m" ? "bg-[#8fa3ae]" : ""}`}>{f}</button>
          ))}
        </div>
        <button className={`${cell} w-[83px] gap-[5px] whitespace-nowrap pl-[5px] font-bold`}>15 minutes <Chevron /></button>
        <button className={`${cell} w-[78px] gap-[5px] pl-[6px]`}><HistoryClock /> Unités <Chevron /></button>
        <button className={`${cell} w-[79px] gap-[5px] whitespace-nowrap pl-[5px] font-bold`}>1 M unités <Chevron /></button>
        <button aria-label="Indicateurs" className={`${cell} w-[31px] justify-center`}><IndicatorIcon /></button>
        <button aria-label="Plus d'indicateurs" className={`${cell} w-[15px] justify-center`}><Chevron /></button>
        <div className={`${cell} gap-2 whitespace-nowrap pl-[6px]`}><WarningIcon /><InfoIcon />Allemagne 40 Cash (1€)</div>
        <div className="ml-auto flex items-center pr-1"><WindowControls /></div>
      </header>
      <EquityPanel />
      <PricePanel />
      <TimeAxis />
      <footer className="flex h-4 shrink-0 items-center justify-between border-t border-[#6c8895] bg-linear-to-b from-[#9ab8c5] to-[#c0dfea] pl-[6px] pr-1 text-[11px] leading-[15px]">
        <span className="whitespace-nowrap">Graphique en mode historique (sans rafraîchissement des données)</span>
        <span className="flex items-center gap-1">
          <svg width="16" height="12" viewBox="0 0 16 12" aria-hidden="true">
            <rect x="4" y=".5" width="11.500" height="11" fill="#fff" stroke="#1f57a8" /><rect x="4" y="0" width="12" height="3" fill="#1f57a8" />
            <path d="M8 10l2-3 2.500 2 2.500-3" stroke="#2aa036" fill="none" strokeWidth="1.300" />
            <path d="M4 1v7M.5 4.500h7" stroke="#1f57a8" strokeWidth="3" /><path d="M4 2v5M1.500 4.500h5" stroke="#fff" strokeWidth="1.600" />
          </svg>
          <a href="#dax" className="text-[11px] text-[#3a4fd0] underline">DAX</a>
        </span>
      </footer>
    </section>
  );
}

export default function App() {
  return (
    <div className={`grid min-h-screen w-full grid-cols-[943fr_973fr] ${FONT} text-black`}>
      <ReportWindow />
      <ChartWindow />
    </div>
  );
}
